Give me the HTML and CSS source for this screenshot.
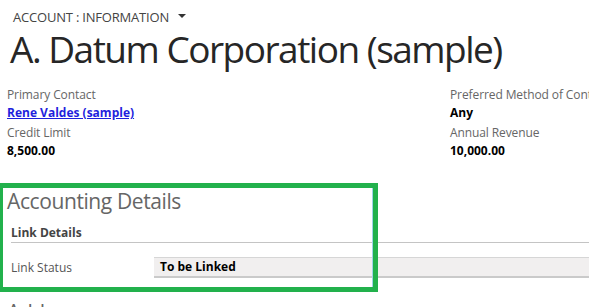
FILE: index.html
```html
<!DOCTYPE html>
<html>
<head>
<meta charset="utf-8">
<link rel="stylesheet" href="styles.css">
</head>
<body>
<div class="page">
  <header class="head">
    <div class="entity">ACCOUNT : INFORMATION <span class="caret"></span></div>
    <h1 class="title">A. Datum Corporation (sample)</h1>
  </header>
  <section class="summary">
    <div class="col col-left">
      <div class="label">Primary Contact</div>
      <div class="value"><a class="link" href="#">Rene Valdes (sample)</a></div>
      <div class="label">Credit Limit</div>
      <div class="value">8,500.00</div>
    </div>
    <div class="col col-right">
      <div class="label">Preferred Method of Contact</div>
      <div class="value">Any</div>
      <div class="label">Annual Revenue</div>
      <div class="value">10,000.00</div>
    </div>
  </section>
  <section class="tab">
    <h2 class="tab-title">Accounting Details</h2>
    <div class="group">
      <div class="group-title">Link Details</div>
      <div class="field">
        <div class="field-label">Link Status</div>
        <div class="field-input">To be Linked</div>
      </div>
    </div>
  </section>
  <section class="tab tab-next">
    <h2 class="tab-title">Address</h2>
  </section>
  <div class="highlight"></div>
</div>
</body>
</html>
```
FILE: styles.css
```css
html, body {
  margin: 0;
  padding: 0;
  background: #ffffff;
  overflow: hidden;
}
body {
  font-family: "Open Sans", "Noto Sans", sans-serif;
  color: #444444;
  width: 589px;
  height: 307px;
}
.page {
  position: relative;
  height: 307px;
  overflow: hidden;
}
.head {
  padding: 8px 0 0 10px;
}
.entity {
  font-size: 13px;
  color: #444444;
  padding-left: 3px;
  line-height: 18px;
  display: flex;
  align-items: center;
  gap: 9px;
  letter-spacing: -0.2px;
}
.caret {
  width: 0;
  height: 0;
  border-left: 4px solid transparent;
  border-right: 4px solid transparent;
  border-top: 4px solid #333333;
  margin-top: -3px;
}
.title {
  margin: 0;
  font-weight: 400;
  font-size: 37px;
  letter-spacing: -1.5px;
  line-height: 46px;
  color: #262626;
  white-space: nowrap;
}
.summary {
  display: flex;
  padding: 14px 0 0 7px;
}
.col {
  display: flex;
  flex-direction: column;
}
.col-left {
  width: 443px;
  flex-shrink: 0;
}
.col-right {
  white-space: nowrap;
}
.label {
  font-size: 12px;
  line-height: 18px;
  color: #666666;
  letter-spacing: -0.1px;
}
.value {
  font-size: 12px;
  line-height: 18px;
  font-weight: 700;
  color: #000000;
  margin-bottom: 2px;
}
.link {
  color: #1f1fdd;
  text-decoration: underline;
}
.tab {
  padding-left: 7px;
}
.tab-title {
  margin: 0;
  font-weight: 400;
  font-size: 21px;
  letter-spacing: -0.4px;
  line-height: 28px;
  color: #666666;
  padding-top: 25px;
}
.tab-next .tab-title {
  padding-top: 20px;
}
.group {
  padding-left: 4px;
}
.group-title {
  font-size: 12px;
  font-weight: 700;
  color: #444444;
  line-height: 18px;
  padding-top: 9px;
  border-bottom: 1px solid #c4c4c4;
  padding-bottom: 0;
}
.field {
  display: flex;
  align-items: center;
  padding-top: 14px;
}
.field-label {
  width: 143px;
  font-size: 12px;
  color: #555555;
  line-height: 18px;
}
.field-input {
  flex: 1;
  height: 18px;
  line-height: 18px;
  background: #f1efef;
  border-top: 1px solid #d6d6d6;
  border-bottom: 2px solid #cacaca;
  padding-left: 6px;
  font-size: 12px;
  font-weight: 700;
  color: #000000;
}
.highlight {
  position: absolute;
  left: -2px;
  top: 183px;
  width: 370px;
  height: 99px;
  border: 5px solid #22b14c;
  box-shadow: inset -1px 0 0 #9fd3e8;
  pointer-events: none;
}
```
